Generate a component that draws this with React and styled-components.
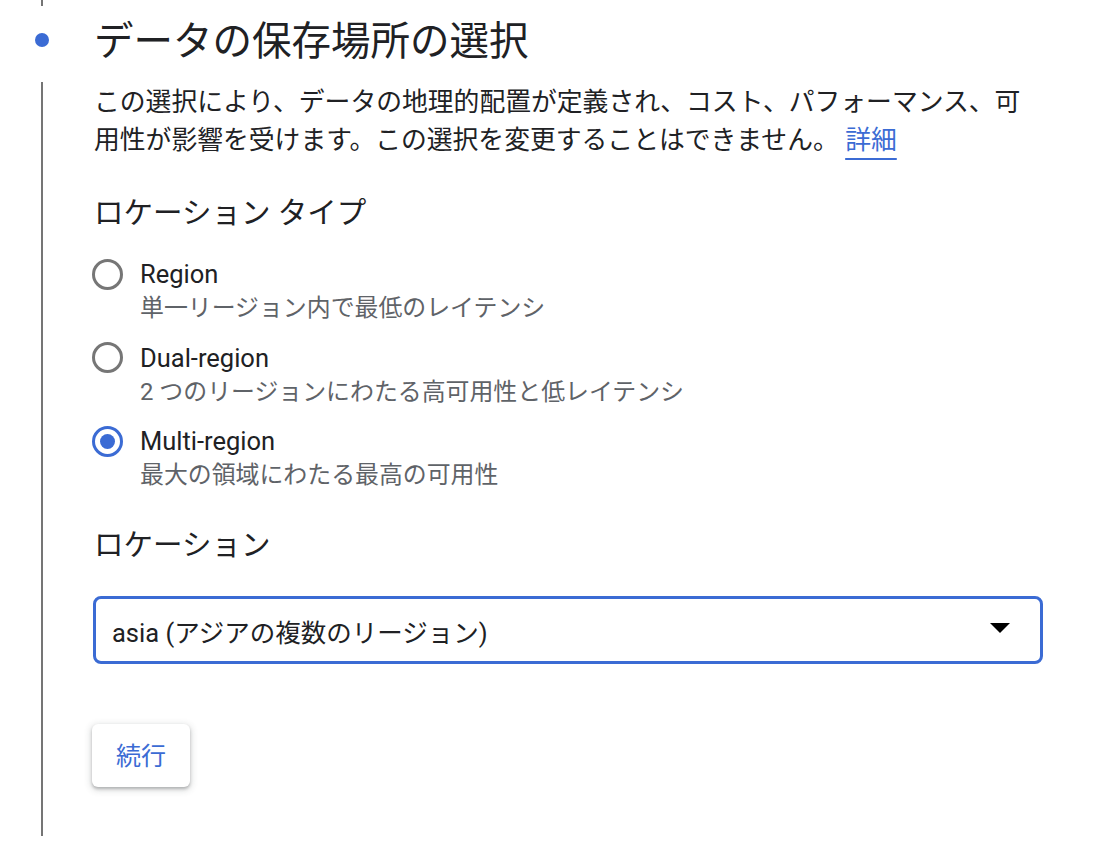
import React, { useState } from "react";
import styled, { createGlobalStyle } from "styled-components";

const GlobalStyle = createGlobalStyle`
  body {
    margin: 0;
    background: #ffffff;
    font-family: Roboto, "Noto Sans CJK JP", sans-serif;
    color: #202124;
  }
`;

const Step = styled.section`
  width: 1116px;
`;

const Connector = styled.div`
  margin-left: 41px;
  width: 2px;
  height: 6px;
  background: #757575;
`;

const StepHeader = styled.div`
  display: flex;
  align-items: center;
  height: 68px;
  padding-left: 35px;
  gap: 45px;
`;

const Dot = styled.span`
  width: 14px;
  height: 14px;
  border-radius: 50%;
  background: #3b6bd4;
  flex-shrink: 0;
`;

const Title = styled.h1`
  margin: 4px 0 0;
  font-size: 39.5px;
  font-weight: 400;
  line-height: 48px;
`;

const StepBody = styled.div`
  margin-top: 8px;
  margin-left: 41px;
  border-left: 2px solid #757575;
  padding: 1px 0 49px 51px;
  width: 949px;
`;

const Description = styled.p`
  margin: 0;
  font-size: 25.8px;
  line-height: 38px;
`;

const LearnMore = styled.a`
  color: #3b6bd4;
  text-decoration: underline;
  text-decoration-thickness: 2px;
  text-underline-offset: 9px;
`;

const SectionLabel = styled.h2`
  margin: ${(p) => p.$top}px 0 0;
  font-size: 29.5px;
  font-weight: 400;
  line-height: 40px;
`;

const RadioGroup = styled.div`
  display: flex;
  flex-direction: column;
  gap: 15.5px;
  margin-top: 24px;
`;

const Option = styled.label`
  display: grid;
  grid-template-columns: 31px 1fr;
  column-gap: 17px;
  margin-left: -2px;
  cursor: pointer;
`;

const Circle = styled.span`
  box-sizing: border-box;
  width: 31px;
  height: 31px;
  margin-top: 1.5px;
  border-radius: 50%;
  border: 3.3px solid ${(p) => (p.$checked ? "#3b6bd4" : "#767676")};
  display: flex;
  align-items: center;
  justify-content: center;

  &::after {
    content: "";
    width: 15px;
    height: 15px;
    border-radius: 50%;
    background: ${(p) => (p.$checked ? "#3b6bd4" : "transparent")};
  }
`;

const OptionTitle = styled.span`
  font-size: 25.5px;
  line-height: 34px;
`;

const OptionHint = styled.span`
  grid-column: 2;
  font-size: 23.9px;
  line-height: 34px;
  color: #5f6368;
`;

const Select = styled.div`
  box-sizing: border-box;
  display: flex;
  align-items: center;
  justify-content: space-between;
  margin-top: 31px;
  height: 68px;
  margin-left: -1px;
  padding: 0 30px 0 16px;
  border: 3px solid #3b6bd4;
  border-radius: 8px;
  font-size: 25.5px;
  cursor: pointer;
`;

const Caret = styled.span`
  width: 0;
  height: 0;
  margin-top: -4px;
  border-left: 10px solid transparent;
  border-right: 10px solid transparent;
  border-top: 10px solid #000;
`;

const ContinueButton = styled.button`
  display: block;
  margin: 60px 0 0 -2px;
  height: 63px;
  padding: 0 24px 4px;
  border: none;
  border-radius: 6px;
  background: #fff;
  color: #3b6bd4;
  font-family: Roboto, "Noto Sans CJK JP", sans-serif;
  font-size: 25px;
  cursor: pointer;
  box-shadow: 0 2px 3px 0 rgba(60, 64, 67, 0.3),
    0 2px 6px 2px rgba(60, 64, 67, 0.15);
`;

const options = [
  { id: "region", title: "Region", hint: "単一リージョン内で最低のレイテンシ" },
  {
    id: "dual",
    title: "Dual-region",
    hint: "2 つのリージョンにわたる高可用性と低レイテンシ",
  },
  { id: "multi", title: "Multi-region", hint: "最大の領域にわたる最高の可用性" },
];

export default function App() {
  const [type, setType] = useState("multi");

  return (
    <>
      <GlobalStyle />
      <Step>
        <Connector />
        <StepHeader>
          <Dot />
          <Title>データの保存場所の選択</Title>
        </StepHeader>
        <StepBody>
          <Description>
            この選択により、データの地理的配置が定義され、コスト、パフォーマンス、可用性が影響を受けます。この選択を変更することはできません。{" "}
            <LearnMore href="#">詳細</LearnMore>
          </Description>

          <SectionLabel $top={34}>ロケーション タイプ</SectionLabel>
          <RadioGroup>
            {options.map((o) => (
              <Option key={o.id} onClick={() => setType(o.id)}>
                <Circle $checked={type === o.id} />
                <OptionTitle>{o.title}</OptionTitle>
                <OptionHint>{o.hint}</OptionHint>
              </Option>
            ))}
          </RadioGroup>

          <SectionLabel $top={33}>ロケーション</SectionLabel>
          <Select>
            <span>asia (アジアの複数のリージョン)</span>
            <Caret />
          </Select>

          <ContinueButton>続行</ContinueButton>
        </StepBody>
      </Step>
    </>
  );
}
